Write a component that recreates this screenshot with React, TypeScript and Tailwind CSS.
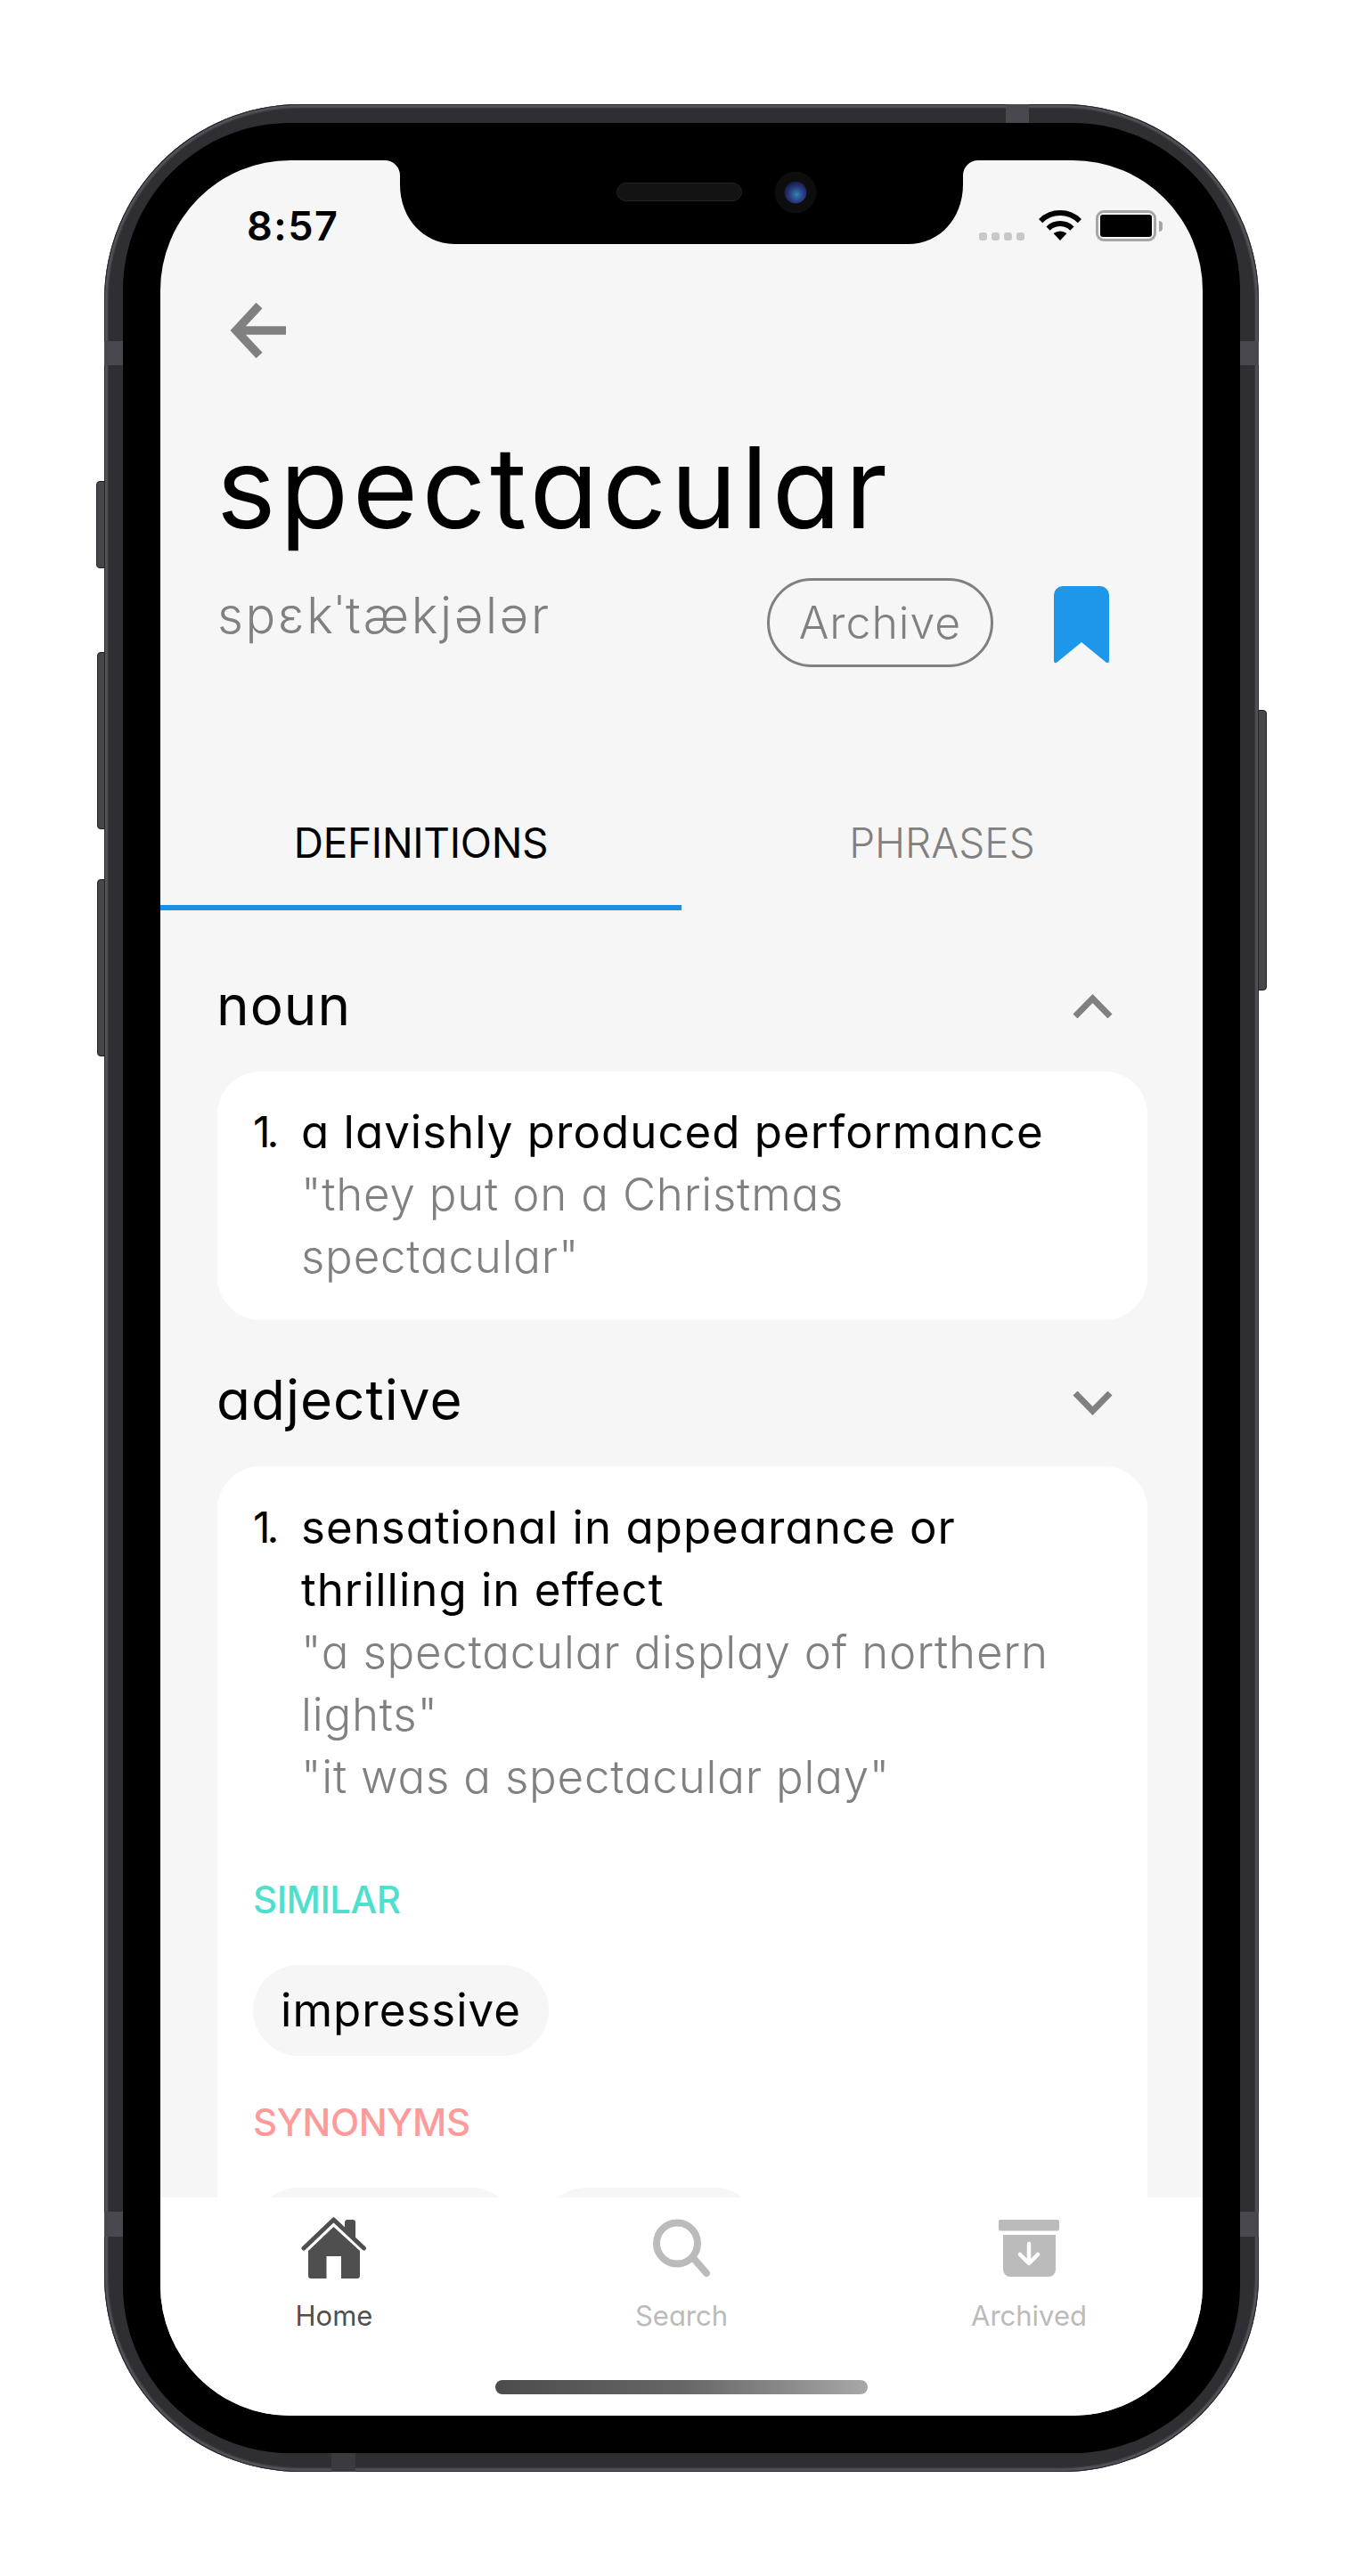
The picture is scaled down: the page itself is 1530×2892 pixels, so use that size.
import React from "react";

const Chevron = ({ up }: { up?: boolean }) => (
  <svg width="45" height="27" viewBox="0 0 45 27" className={up ? "" : "rotate-180 mt-[6px]"}>
    <path d="M3 25 L22.5 5 L42 25" fill="none" stroke="#808080" strokeWidth="7" />
  </svg>
);

const Line = ({ children, gray }: { children: React.ReactNode; gray?: boolean }) => (
  <span className={gray ? "block whitespace-nowrap font-light text-[#808080] tracking-[0.8px]" : "block whitespace-nowrap text-black tracking-[1px]"}>{children}</span>
);

const Chip = ({ children, w }: { children?: React.ReactNode; w: string }) => (
  <div className={`${w} h-[102px] shrink-0 rounded-[51px] bg-[#f6f6f6] flex items-center justify-center text-[51px] leading-[60px] tracking-[1px] text-black`}>
    {children}
  </div>
);

const Home = () => (
  <svg width="74" height="70" viewBox="0 0 74 70">
    <path d="M3 35 L36.5 3 L70.5 35" fill="none" stroke="#4f4f4f" strokeWidth="5" strokeLinecap="round" strokeLinejoin="round" />
    <path d="M49 6 Q49 3 52 3 H58 Q61 3 61 6 V24 L49 13 Z" fill="#4f4f4f" />
    <path d="M36.5 11 L66 38 V66 Q66 69 63 69 H45 V44 H28.5 V69 H11 Q8 69 8 66 V38 Z" fill="#4f4f4f" />
  </svg>
);
const Search = () => (
  <svg width="74" height="70" viewBox="0 0 74 70" fill="none" stroke="#bbbbbb" strokeWidth="8">
    <circle cx="32" cy="29.5" r="23" />
    <path d="M52 48 L65 63" strokeLinecap="round" />
  </svg>
);
const Archive = () => (
  <svg width="74" height="70" viewBox="0 0 74 70">
    <rect x="3" y="3" width="68" height="12.5" rx="2" fill="#bbbbbb" />
    <path d="M8 20 H67 V59 a8 8 0 0 1 -8 8 H16 a8 8 0 0 1 -8 -8 Z" fill="#bbbbbb" />
    <path d="M37 30 V51 M27 42 L37 52 L47 42" fill="none" stroke="#fff" strokeWidth="4.5" strokeLinecap="round" strokeLinejoin="round" />
  </svg>
);

const Tab = ({ icon, label, active }: { icon: React.ReactNode; label: string; active?: boolean }) => (
  <div className="flex flex-col items-center pt-[22px]">
    {icon}
    <span className={`mt-[21px] text-[31px] leading-[40px] ${active ? "text-[#4f4f4f]" : "text-[#bbbbbb]"}`}>{label}</span>
  </div>
);

export default function App() {
  return (
    <div className="relative w-[1530px] h-[2892px] bg-white pt-[117px] pl-[117px] font-[Inter,sans-serif] [font-feature-settings:'cv11']">
      {/* side buttons */}
      <div className="absolute left-[108px] top-[540px] w-[12px] h-[98px] rounded-l-[4px] bg-[#46464c] border border-[#1f1f22]" />
      <div className="absolute left-[109px] top-[732px] w-[11px] h-[199px] rounded-l-[4px] bg-[#46464c] border border-[#1f1f22]" />
      <div className="absolute left-[109px] top-[987px] w-[11px] h-[199px] rounded-l-[4px] bg-[#46464c] border border-[#1f1f22]" />
      <div className="absolute left-[1410px] top-[797px] w-[12px] h-[315px] rounded-r-[4px] bg-[#46464c] border border-[#1f1f22]" />

      {/* device */}
      <div className="relative w-[1296px] h-[2658px] rounded-[220px] p-[21px] bg-[#2e2e33] shadow-[inset_0_0_0_1px_#242428,inset_0_0_2px_4px_#54545b]">
        {/* antenna bands */}
        <div className="absolute left-0 top-[266px] w-[21px] h-[27px] bg-[#48484e]" />
        <div className="absolute right-0 top-[266px] w-[21px] h-[27px] bg-[#48484e]" />
        <div className="absolute left-0 top-[2366px] w-[21px] h-[28px] bg-[#48484e]" />
        <div className="absolute right-0 top-[2366px] w-[21px] h-[28px] bg-[#48484e]" />
        <div className="absolute left-[1012px] top-0 w-[26px] h-[21px] bg-[#48484e]" />
        <div className="absolute left-[255px] bottom-0 w-[27px] h-[21px] bg-[#3a3a3f]" />

        <div className="h-full rounded-[188px] bg-black p-[42px]">
          {/* screen */}
          <div className="relative w-[1170px] h-[2532px] rounded-[146px] overflow-hidden bg-[#f6f6f6] flex flex-col">
            {/* notch */}
            <svg className="absolute left-[245px] top-0" width="680" height="94" viewBox="0 0 680 94">
              <defs>
                <radialGradient id="lens" cx="0.55" cy="0.6" r="0.6">
                  <stop offset="0" stopColor="#2f86b0" />
                  <stop offset="0.5" stopColor="#2b3f86" />
                  <stop offset="1" stopColor="#141a3a" />
                </radialGradient>
              </defs>
              <path d="M7 0 A17 17 0 0 1 24 17 V27 C24 65 50 94 86 94 H594 C630 94 656 65 656 27 V17 A17 17 0 0 1 673 0 Z" fill="#000" />
              <rect x="267.5" y="25.5" width="140" height="20" rx="10" fill="#131313" stroke="#242424" />
              <circle cx="468" cy="36" r="23.5" fill="#0d0d0d" />
              <circle cx="468" cy="36" r="12.5" fill="url(#lens)" />
            </svg>

            <div className="flex-1 min-h-0 overflow-hidden">
              {/* status bar */}
              <div className="flex items-start pt-[56px] pl-[97px] pr-[45px] h-[91px]">
                <span className="text-[45px] leading-[36px] font-semibold text-black tracking-[1.5px]">8:57</span>
                <div className="ml-auto flex items-end h-[35px]">
                  <div className="flex gap-[5px] mb-[1px]">
                    <span className="w-[9px] h-[9px] rounded-[3px] bg-[#c8c8c8]" />
                    <span className="w-[9px] h-[9px] rounded-[3px] bg-[#c8c8c8]" />
                    <span className="w-[9px] h-[9px] rounded-[3px] bg-[#c8c8c8]" />
                    <span className="w-[9px] h-[9px] rounded-[3px] bg-[#c8c8c8]" />
                  </div>
                  <svg className="ml-[16px]" width="48" height="35" viewBox="0 0 48 35">
                    <path d="M2.1 12.1 A31 31 0 0 1 45.9 12.1 M10.6 20.6 A19 19 0 0 1 37.4 20.6" fill="none" stroke="#000" strokeWidth="6" />
                    <path d="M24 34 L16.5 26 Q24 21 31.5 26 Z" fill="#000" />
                  </svg>
                  <div className="ml-[16px] w-[68px] h-[35px] rounded-[9px] border-[3px] border-[#a6a6a6] p-[2px]">
                    <div className="w-full h-full rounded-[3px] bg-black" />
                  </div>
                  <div className="ml-[3px] mb-[11px] w-[4px] h-[12px] rounded-r-[4px] bg-[#a6a6a6]" />
                </div>
              </div>

              {/* back arrow */}
              <svg className="ml-[77px] mt-[69px]" width="64" height="62" viewBox="0 0 64 62">
                <path d="M34 3 L8 31 L34 59 M8 31 H64" fill="none" stroke="#808080" strokeWidth="9.5" />
              </svg>

              {/* title */}
              <h1 className="ml-[63px] mt-[70px] text-[126px] leading-[150px] font-normal text-black tracking-[4.5px]">spectacular</h1>

              {/* phonetic row */}
              <div className="flex items-start mt-[27px] pl-[64px] pr-[105px]">
                <span className="mt-[12px] text-[56px] leading-[60px] font-light text-[#808080] tracking-[2.7px]">spɛkˈtækjələr</span>
                <div className="ml-auto w-[254px] h-[100px] rounded-[50px] border-[3px] border-[#808080] flex items-center justify-center text-[50px] leading-[60px] font-light text-[#808080] tracking-[1px]">
                  Archive
                </div>
                <svg className="ml-[68px] mt-[9px]" width="62" height="87" viewBox="0 0 62 87">
                  <path d="M0 10 a10 10 0 0 1 10 -10 H52 a10 10 0 0 1 10 10 V83 Q62 88 58.5 85.5 L31 63 L3.5 85.5 Q0 88 0 83 Z" fill="#1c97ea" />
                </svg>
              </div>

              {/* tabs */}
              <div className="grid grid-cols-2 mt-[167px]">
                <div className="pb-[40px] border-b-[6px] border-[#1c8fe6] text-center text-[46px] leading-[60px] text-black tracking-[-0.3px]">DEFINITIONS</div>
                <div className="pb-[40px] border-b-[6px] border-transparent text-center text-[46px] leading-[60px] font-light text-[#808080]">PHRASES</div>
              </div>

              {/* noun */}
              <div className="flex items-center justify-between mt-[71px] pl-[63px] pr-[101px]">
                <span className="text-[62px] leading-[72px] text-black tracking-[1px]">noun</span>
                <Chevron up />
              </div>
              <div className="mt-[38px] ml-[64px] mr-[62px] h-[279px] rounded-[48px] bg-white pt-[33px] pl-[40px] flex">
                <span className="w-[54px] shrink-0 text-[48px] leading-[70px] text-black tracking-[-4px]">1.</span>
                <div className="text-[51px] leading-[70px]">
                  <Line>a lavishly produced performance</Line>
                  <Line gray>"they put on a Christmas</Line>
                  <Line gray>spectacular"</Line>
                </div>
              </div>

              {/* adjective */}
              <div className="flex items-center justify-between mt-[54px] pl-[63px] pr-[101px]">
                <span className="text-[62px] leading-[72px] text-black tracking-[1px]">adjective</span>
                <Chevron />
              </div>
              <div className="mt-[38px] ml-[64px] mr-[62px] rounded-t-[48px] bg-white pt-[34px] pl-[40px] pb-[60px]">
                <div className="flex">
                  <span className="w-[54px] shrink-0 text-[48px] leading-[70px] text-black tracking-[-4px]">1.</span>
                  <div className="text-[51px] leading-[70px]">
                    <Line>sensational in appearance or</Line>
                    <Line>thrilling in effect</Line>
                    <Line gray>"a spectacular display of northern</Line>
                    <Line gray>lights"</Line>
                    <Line gray>"it was a spectacular play"</Line>
                  </div>
                </div>
                <div className="mt-[78px] text-[42px] leading-[50px] font-medium text-[#4fdfcd] tracking-[-0.5px]">SIMILAR</div>
                <div className="mt-[48px] flex">
                  <Chip w="w-[332px]">impressive</Chip>
                </div>
                <div className="mt-[50px] text-[42px] leading-[50px] font-medium text-[#ff9a9a] tracking-[-0.4px]">SYNONYMS</div>
                <div className="mt-[48px] flex gap-[27px]">
                  <Chip w="w-[296px]" />
                  <Chip w="w-[246px]" />
                </div>
              </div>
            </div>

            {/* tab bar */}
            <div className="shrink-0 h-[245px] bg-white flex flex-col">
              <div className="grid grid-cols-3">
                <Tab icon={<Home />} label="Home" active />
                <Tab icon={<Search />} label="Search" />
                <Tab icon={<Archive />} label="Archived" />
              </div>
              <div className="mt-[52px] self-center w-[418px] h-[16px] rounded-[8px] bg-gradient-to-r from-[#4c4c4c] via-[#666666] to-[#a8a8a8]" />
            </div>
          </div>
        </div>
      </div>
    </div>
  );
}
